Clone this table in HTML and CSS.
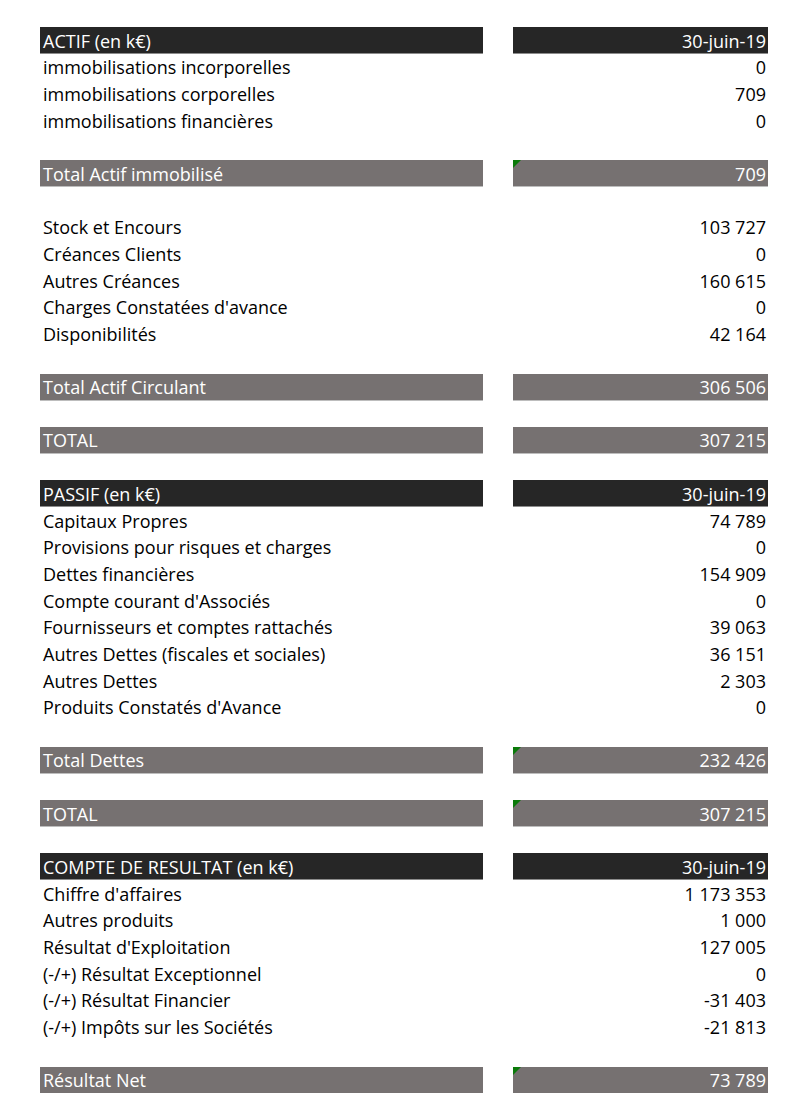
FILE: index.html
```html
<!DOCTYPE html>
<html lang="fr">
<head>
<meta charset="utf-8">
<link rel="stylesheet" href="styles.css">
</head>
<body>
<div class="sheet">
  <div class="row head"><div class="lbl">ACTIF (en k€)</div><div class="val">30-juin-19</div></div>
  <div class="row"><div class="lbl">immobilisations incorporelles</div><div class="val">0</div></div>
  <div class="row"><div class="lbl">immobilisations corporelles</div><div class="val">709</div></div>
  <div class="row"><div class="lbl">immobilisations financières</div><div class="val">0</div></div>
  <div class="row"></div>
  <div class="row total"><div class="lbl">Total Actif immobilisé</div><div class="val flag">709</div></div>
  <div class="row"></div>
  <div class="row"><div class="lbl">Stock et Encours</div><div class="val">103 727</div></div>
  <div class="row"><div class="lbl">Créances Clients</div><div class="val">0</div></div>
  <div class="row"><div class="lbl">Autres Créances</div><div class="val">160 615</div></div>
  <div class="row"><div class="lbl">Charges Constatées d'avance</div><div class="val">0</div></div>
  <div class="row"><div class="lbl">Disponibilités</div><div class="val">42 164</div></div>
  <div class="row"></div>
  <div class="row total"><div class="lbl">Total Actif Circulant</div><div class="val">306 506</div></div>
  <div class="row"></div>
  <div class="row total"><div class="lbl">TOTAL</div><div class="val">307 215</div></div>
  <div class="row"></div>
  <div class="row head"><div class="lbl">PASSIF (en k€)</div><div class="val">30-juin-19</div></div>
  <div class="row"><div class="lbl">Capitaux Propres</div><div class="val">74 789</div></div>
  <div class="row"><div class="lbl">Provisions pour risques et charges</div><div class="val">0</div></div>
  <div class="row"><div class="lbl">Dettes financières</div><div class="val">154 909</div></div>
  <div class="row"><div class="lbl">Compte courant d'Associés</div><div class="val">0</div></div>
  <div class="row"><div class="lbl">Fournisseurs et comptes rattachés</div><div class="val">39 063</div></div>
  <div class="row"><div class="lbl">Autres Dettes (fiscales et sociales)</div><div class="val">36 151</div></div>
  <div class="row"><div class="lbl">Autres Dettes</div><div class="val">2 303</div></div>
  <div class="row"><div class="lbl">Produits Constatés d'Avance</div><div class="val">0</div></div>
  <div class="row"></div>
  <div class="row total"><div class="lbl">Total Dettes</div><div class="val flag">232 426</div></div>
  <div class="row"></div>
  <div class="row total"><div class="lbl">TOTAL</div><div class="val flag">307 215</div></div>
  <div class="row"></div>
  <div class="row head"><div class="lbl">COMPTE DE RESULTAT (en k€)</div><div class="val">30-juin-19</div></div>
  <div class="row"><div class="lbl">Chiffre d'affaires</div><div class="val">1 173 353</div></div>
  <div class="row"><div class="lbl">Autres produits</div><div class="val">1 000</div></div>
  <div class="row"><div class="lbl">Résultat d'Exploitation</div><div class="val">127 005</div></div>
  <div class="row"><div class="lbl">(-/+) Résultat Exceptionnel</div><div class="val">0</div></div>
  <div class="row"><div class="lbl">(-/+) Résultat Financier</div><div class="val">-31 403</div></div>
  <div class="row"><div class="lbl">(-/+) Impôts sur les Sociétés</div><div class="val">-21 813</div></div>
  <div class="row"></div>
  <div class="row total"><div class="lbl">Résultat Net</div><div class="val flag">73 789</div></div>
</div>
</body>
</html>
```
FILE: styles.css
```css
html, body {
  margin: 0;
  padding: 0;
  background: #ffffff;
}
body {
  font-family: "Open Sans", Lato, "Liberation Sans", sans-serif;
  font-size: 18px;
  font-variant-ligatures: none;
  color: #000000;
}
.sheet {
  padding: 27px 0 0 40px;
}
.row {
  display: grid;
  grid-template-columns: 443px 255px;
  column-gap: 30px;
  height: 26.67px;
  align-items: stretch;
}
.lbl, .val {
  display: flex;
  align-items: center;
  white-space: nowrap;
  line-height: 1;
  padding-top: 1px;
  box-sizing: border-box;
}
.lbl {
  padding-left: 3px;
}
.val {
  justify-content: flex-end;
  padding-right: 2px;
  font-variant-numeric: tabular-nums;
}
.head .lbl, .head .val {
  background: #262626;
  color: #ffffff;
  height: 26px;
  box-shadow: 0 1px 0 #8c8c8c;
}
.total .lbl, .total .val {
  background: #767171;
  color: #ffffff;
  height: 26px;
  box-shadow: 0 1px 0 #bdbdbd;
}
.flag {
  position: relative;
}
.flag::before {
  content: "";
  position: absolute;
  left: 0;
  top: 0;
  width: 0;
  height: 0;
  border-top: 8px solid #0a7a0a;
  border-right: 8px solid transparent;
}
```
